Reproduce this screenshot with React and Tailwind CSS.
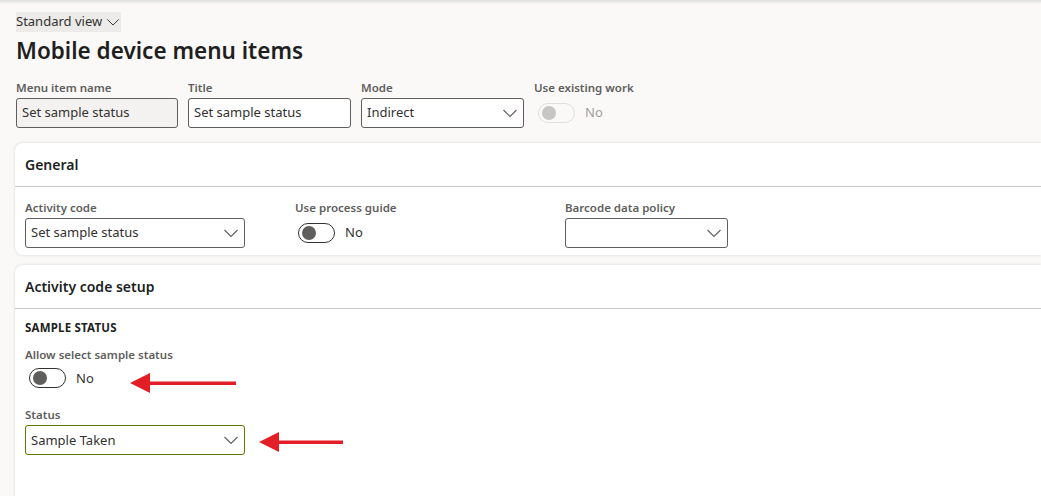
import React from 'react';

const Chevron = ({ className = '', size = 16 }) => (
    <svg width={size} height={size} viewBox="0 0 16 16" className={className}>
        <path d="M1.5 5 L8 11.5 L14.5 5" fill="none" stroke="currentColor" strokeWidth="1.1" />
    </svg>
);

const Label = ({ children }) => (
    <div className="text-[11.5px] leading-[16px] font-semibold text-[#605e5c] mb-[2px] whitespace-nowrap">{children}</div>
);

const TextBox = ({ value, width, readOnly }) => (
    <div
        className={`h-[30px] rounded-[3px] border border-[#605e5c] px-[5px] flex items-center text-[13px] text-[#323130] ${readOnly ? 'bg-[#f3f2f1]' : 'bg-white'}`}
        style={{ width }}
    >
        {value}
    </div>
);

const Select = ({ value, width, green }) => (
    <div
        className={`h-[30px] rounded-[3px] border px-[5px] flex items-center justify-between text-[13px] text-[#323130] bg-white ${green ? 'border-[#5b7a00]' : 'border-[#605e5c]'}`}
        style={{ width }}
    >
        <span>{value}</span>
        <Chevron className="text-[#605e5c]" />
    </div>
);

const Toggle = ({ disabled }) => (
    <div className="flex items-center gap-[10px] h-[20px]">
        <div className={`w-[37px] h-[20px] rounded-full border flex items-center px-[3px] ${disabled ? 'border-[#e1dfdd]' : 'border-[#323130]'}`}>
            <div className={`w-[14px] h-[14px] rounded-full ${disabled ? 'bg-[#c8c6c4]' : 'bg-[#605e5c]'}`} />
        </div>
        <span className={`text-[13px] ${disabled ? 'text-[#a19f9d]' : 'text-[#323130]'}`}>No</span>
    </div>
);

const Arrow = ({ width }) => (
    <svg width={width} height="22" viewBox={`0 0 ${width} 22`}>
        <polygon points="0,11 20,1 20,21" fill="#e41e26" />
        <rect x="18" y="9.5" width={width - 18} height="3.5" fill="#e41e26" />
    </svg>
);

const Card = ({ title, children, className = '' }) => (
    <div className={`ml-[15px] bg-white rounded-l-[8px] shadow-[0_0_3px_rgba(0,0,0,0.15)] ${className}`}>
        <div className="h-[44px] flex items-center px-[10px] border-b border-[#c8c6c4] text-[14px] font-semibold text-[#201f1e]">
            {title}
        </div>
        {children}
    </div>
);

export default function App() {
    return (
        <div
            className="w-[1041px] h-[496px] overflow-hidden bg-[#faf9f8] relative"
            style={{ fontFamily: '"Segoe UI", "Noto Sans", "Open Sans", sans-serif' }}
        >
            <div className="h-[4px] bg-gradient-to-b from-[#dcdcdc] to-[#faf9f8]" />
            <div className="px-[16px] pt-[8px]">
                <div className="flex w-fit items-center gap-[4px] bg-[#edebe9] h-[20px] pr-[1px] text-[13px] text-[#323130]">
                    Standard view <Chevron size={14} className="text-[#323130]" />
                </div>
                <h1 className="text-[22.5px] leading-[30px] font-semibold text-[#201f1e] mt-[4px]">Mobile device menu items</h1>
                <div className="flex gap-[10px] mt-[14px]">
                    <div>
                        <Label>Menu item name</Label>
                        <TextBox value="Set sample status" width={162} readOnly />
                    </div>
                    <div>
                        <Label>Title</Label>
                        <TextBox value="Set sample status" width={163} />
                    </div>
                    <div>
                        <Label>Mode</Label>
                        <Select value="Indirect" width={163} />
                    </div>
                    <div>
                        <Label>Use existing work</Label>
                        <div className="pl-[4px] pt-[5px]">
                            <Toggle disabled />
                        </div>
                    </div>
                </div>
            </div>

            <Card title="General" className="mt-[15px] h-[112px]">
                <div className="flex px-[10px] pt-[13px]">
                    <div className="w-[270px]">
                        <Label>Activity code</Label>
                        <Select value="Set sample status" width={220} />
                    </div>
                    <div className="w-[270px]">
                        <Label>Use process guide</Label>
                        <div className="pl-[3px] pt-[5px]">
                            <Toggle />
                        </div>
                    </div>
                    <div>
                        <Label>Barcode data policy</Label>
                        <Select value="" width={163} />
                    </div>
                </div>
            </Card>

            <Card title="Activity code setup" className="mt-[10px] h-[260px]">
                <div className="px-[10px] pt-[10px]">
                    <div className="text-[11.5px] font-bold text-[#201f1e] tracking-[0.2px]">SAMPLE STATUS</div>
                    <div className="mt-[11px]">
                        <Label>Allow select sample status</Label>
                        <div className="flex items-start mt-[5px]">
                            <div className="pl-[4px]">
                                <Toggle />
                            </div>
                            <div className="ml-[36px] mt-[4px]">
                                <Arrow width={106} />
                            </div>
                        </div>
                    </div>
                    <div className="mt-[13px]">
                        <Label>Status</Label>
                        <div className="flex items-start">
                            <Select value="Sample Taken" width={220} green />
                            <div className="ml-[14px] mt-[6px]">
                                <Arrow width={84} />
                            </div>
                        </div>
                    </div>
                </div>
            </Card>
        </div>
    );
}
